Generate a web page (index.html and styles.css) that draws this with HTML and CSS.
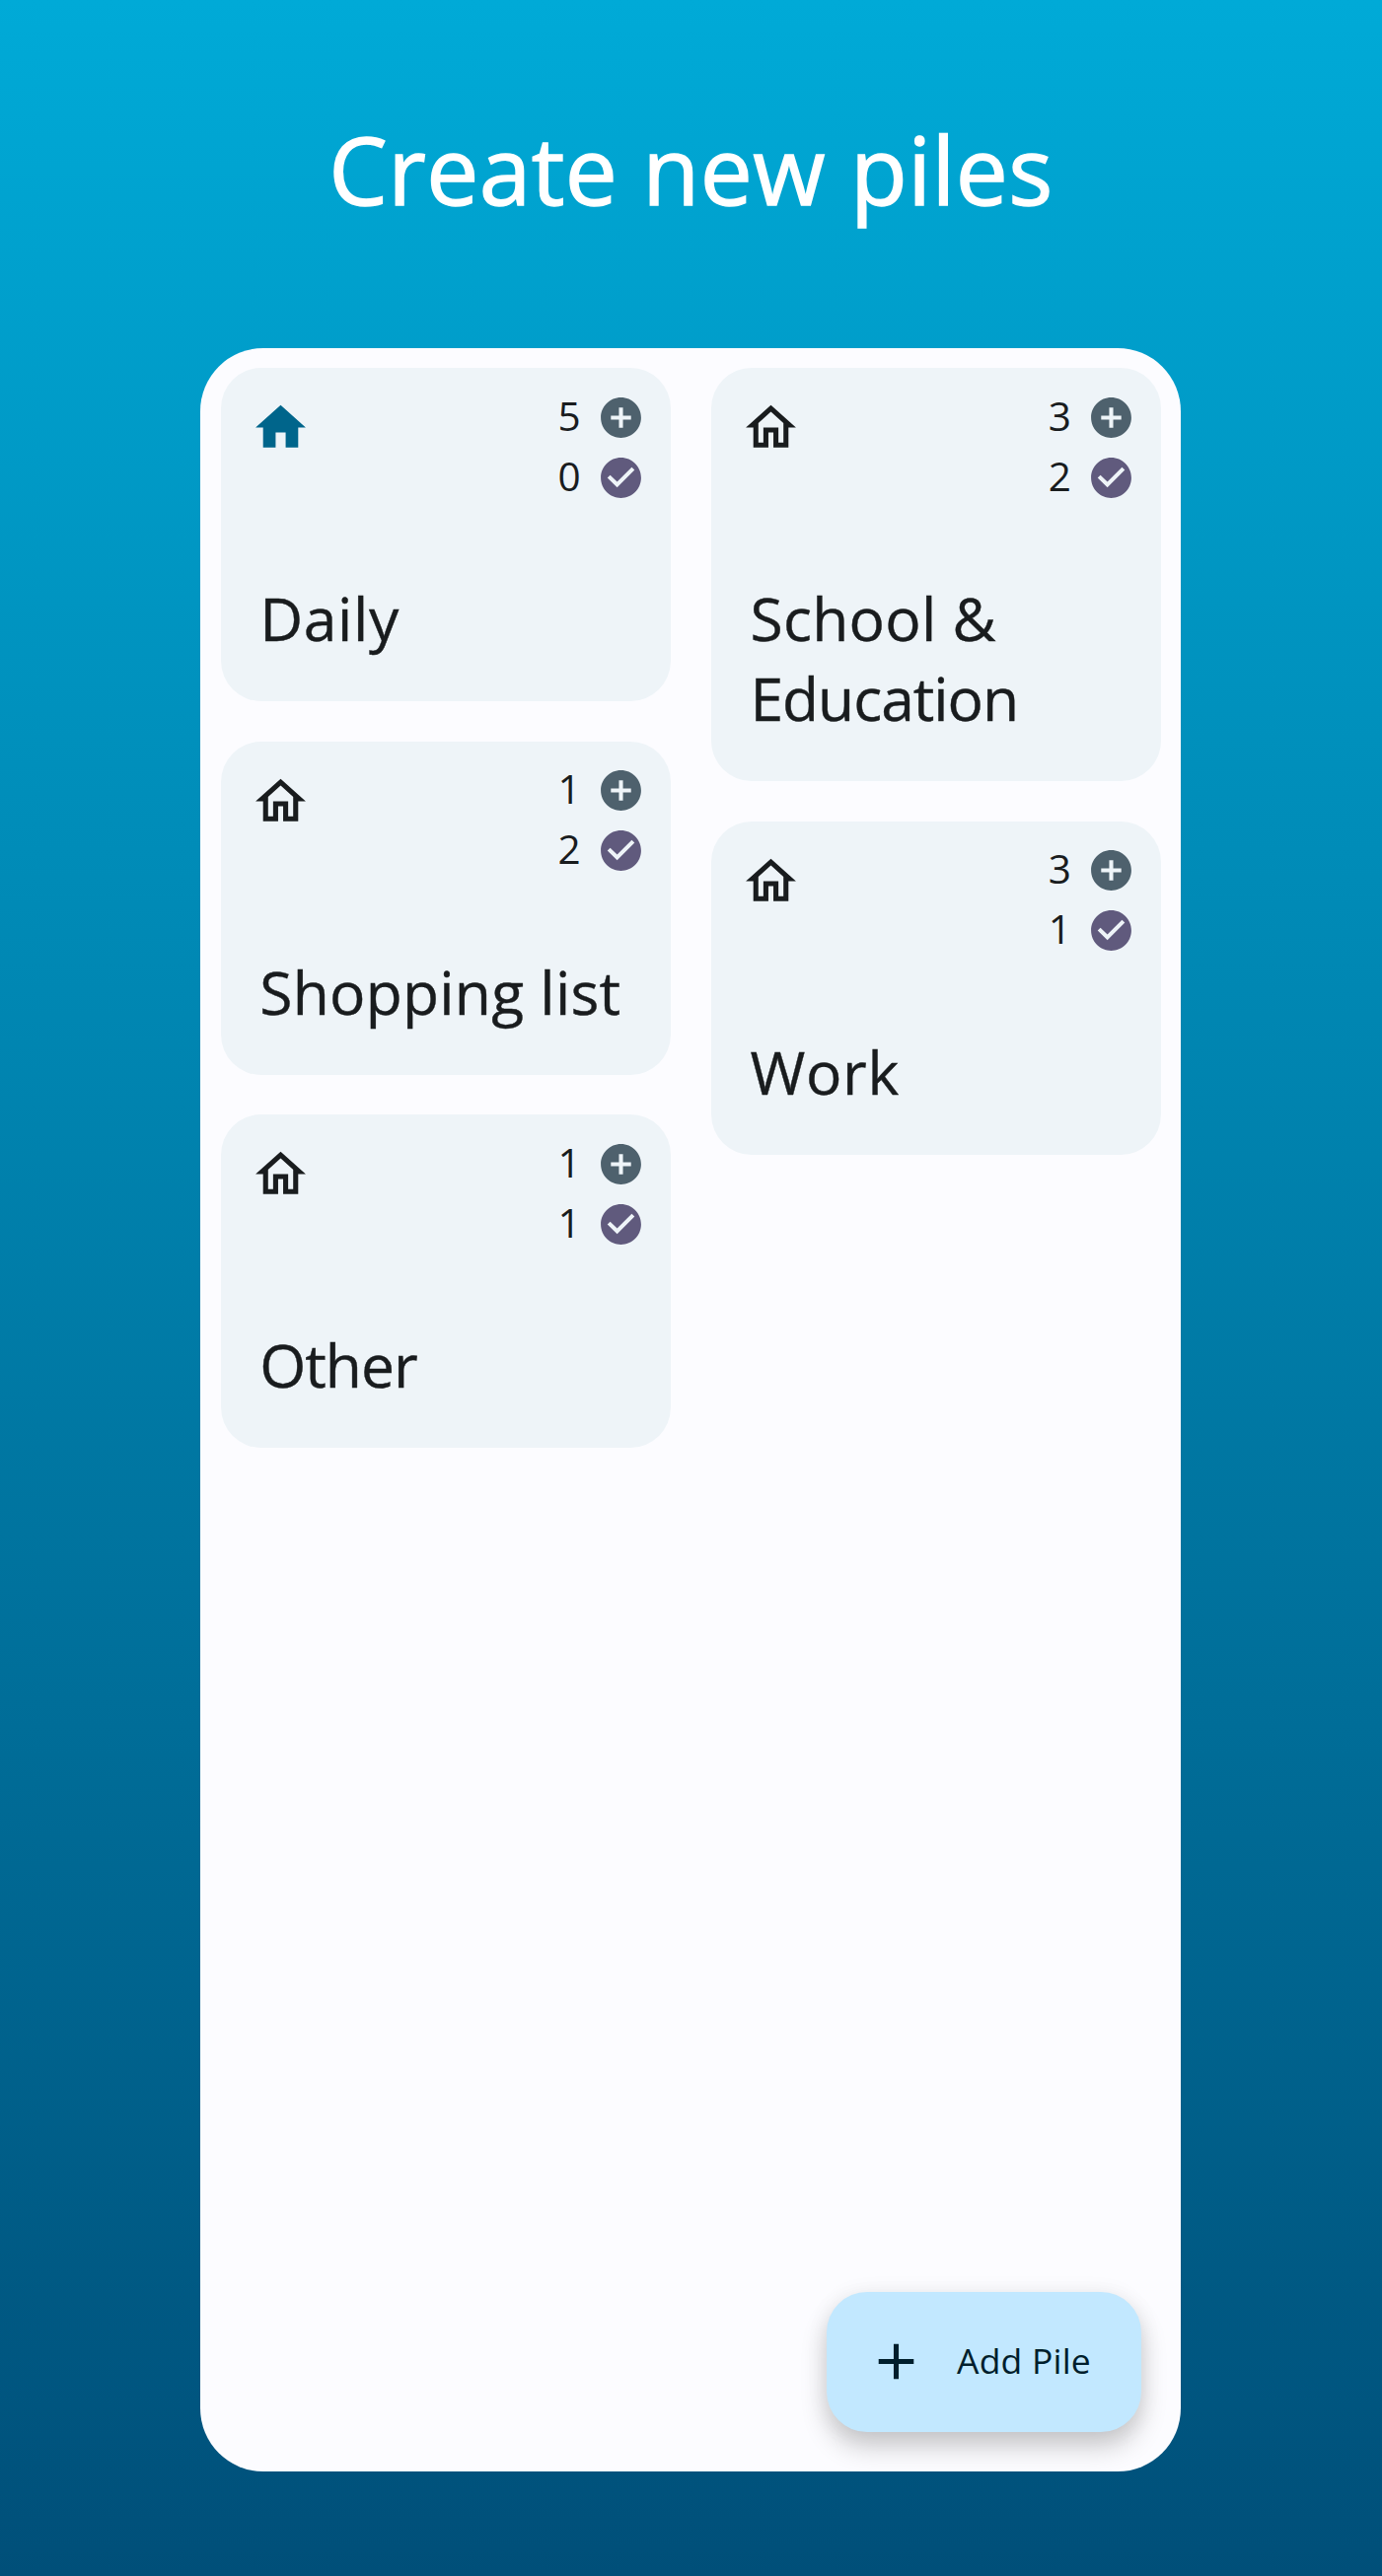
FILE: index.html
```
<!DOCTYPE html>
<html lang="en">
<head>
<meta charset="utf-8">
<title>Create new piles</title>
<link rel="stylesheet" href="styles.css">
</head>
<body>
<svg class="sprite" aria-hidden="true">
  <symbol id="home" viewBox="0 0 24 24"><path d="M10 20v-6h4v6h5v-8h3L12 3 2 12h3v8z"/></symbol>
  <symbol id="home-outline" viewBox="0 0 24 24"><path d="M12 5.69l5 4.5V18h-2v-6H9v6H7v-7.81l5-4.5M12 3L2 12h3v8h6v-6h2v6h6v-8h3L12 3z"/></symbol>
  <symbol id="add-circle" viewBox="0 0 24 24"><path d="M12 2C6.48 2 2 6.48 2 12s4.48 10 10 10 10-4.48 10-10S17.52 2 12 2zm5 11h-4v4h-2v-4H7v-2h4V7h2v4h4v2z"/></symbol>
  <symbol id="check-circle" viewBox="0 0 24 24"><path fill-rule="evenodd" d="M12 2C6.48 2 2 6.48 2 12s4.48 10 10 10 10-4.48 10-10S17.52 2 12 2zM10.1 16.8l-4.85-4.8 1.4-1.4 3.45 3.4 7.25-7.3 1.4 1.4z"/></symbol>
  <symbol id="add" viewBox="0 0 24 24"><path d="M19 13h-6v6h-2v-6H5v-2h6V5h2v6h6v2z"/></symbol>
</svg>

<h1 class="headline">Create new piles</h1>

<main class="screen">
  <div class="columns">
    <div class="column">
      <article class="pile">
        <div class="pile-top">
          <svg class="home home-active"><use href="#home"/></svg>
          <div class="counts">
            <div class="count"><span>5</span><svg class="icon open"><use href="#add-circle"/></svg></div>
            <div class="count"><span>0</span><svg class="icon done"><use href="#check-circle"/></svg></div>
          </div>
        </div>
        <h2 class="pile-title loose">Daily</h2>
      </article>
      <article class="pile">
        <div class="pile-top">
          <svg class="home"><use href="#home-outline"/></svg>
          <div class="counts">
            <div class="count"><span>1</span><svg class="icon open"><use href="#add-circle"/></svg></div>
            <div class="count"><span>2</span><svg class="icon done"><use href="#check-circle"/></svg></div>
          </div>
        </div>
        <h2 class="pile-title">Shopping list</h2>
      </article>
      <article class="pile">
        <div class="pile-top">
          <svg class="home"><use href="#home-outline"/></svg>
          <div class="counts">
            <div class="count"><span>1</span><svg class="icon open"><use href="#add-circle"/></svg></div>
            <div class="count"><span>1</span><svg class="icon done"><use href="#check-circle"/></svg></div>
          </div>
        </div>
        <h2 class="pile-title tighter">Other</h2>
      </article>
    </div>
    <div class="column">
      <article class="pile">
        <div class="pile-top">
          <svg class="home"><use href="#home-outline"/></svg>
          <div class="counts">
            <div class="count"><span>3</span><svg class="icon open"><use href="#add-circle"/></svg></div>
            <div class="count"><span>2</span><svg class="icon done"><use href="#check-circle"/></svg></div>
          </div>
        </div>
        <h2 class="pile-title">School &amp;<br><span class="tighter">Education</span></h2>
      </article>
      <article class="pile">
        <div class="pile-top">
          <svg class="home"><use href="#home-outline"/></svg>
          <div class="counts">
            <div class="count"><span>3</span><svg class="icon open"><use href="#add-circle"/></svg></div>
            <div class="count"><span>1</span><svg class="icon done"><use href="#check-circle"/></svg></div>
          </div>
        </div>
        <h2 class="pile-title loose">Work</h2>
      </article>
    </div>
  </div>
  <button class="fab"><svg class="fab-icon"><use href="#add"/></svg><span class="fab-label">Add Pile</span></button>
</main>
</body>
</html>
```
FILE: styles.css
```
* { box-sizing: border-box; }

body {
  margin: 0;
  height: 2612px;
  display: flex;
  flex-direction: column;
  align-items: center;
  background: linear-gradient(180deg, #00aad7 0%, #004f79 100%);
  font-family: "Open Sans", Lato, sans-serif;
  color: #191c1e;
}

.sprite { display: none; }
svg { flex: none; fill: currentColor; }

.headline {
  margin: 0;
  height: 353px;
  line-height: 343px;
  font-size: 94.5px;
  font-weight: 400;
  letter-spacing: 0.45px;
  -webkit-text-stroke: 1.4px #fff;
  color: #fff;
}

.screen {
  width: 994px;
  height: 2153px;
  margin-right: 1px;
  padding: 20px 20px 20.5px 20.5px;
  display: flex;
  flex-direction: column;
  border-radius: 64px;
  background: #fcfcff;
}

.columns {
  display: grid;
  grid-template-columns: 1fr 1fr;
  gap: 41px;
  align-items: start;
}

.column {
  display: flex;
  flex-direction: column;
  gap: 40.5px;
}

.pile {
  padding-bottom: 44px;
  border-radius: 41px;
  background: #eef4f8;
}

.pile-top {
  height: 213px;
  padding: 25.5px 26px 0 30px;
  display: flex;
  justify-content: space-between;
  align-items: flex-start;
}

.home {
  width: 61px;
  height: 61px;
  margin-top: 4.5px;
}

.home-active { color: #00658b; }

.counts {
  display: flex;
  flex-direction: column;
  gap: 12px;
}

.count {
  display: flex;
  gap: 16px;
  font-size: 40.5px;
  line-height: 46px;
}

.icon {
  width: 49px;
  height: 49px;
}

.open { color: #4e616d; }
.done { color: #605a7d; }

.pile-title {
  margin: 0;
  padding-left: 39.7px;
  font-size: 60.5px;
  font-weight: 400;
  line-height: 81px;
  letter-spacing: 0.28px;
  -webkit-text-stroke: 0.4px currentColor;
  white-space: nowrap;
}

.loose { letter-spacing: 0.7px; }
.tighter { letter-spacing: -1px; }

.fab {
  width: 319px;
  height: 142px;
  margin: auto 20.5px 20px 0;
  padding: 0 0 0 40px;
  align-self: flex-end;
  display: flex;
  align-items: center;
  gap: 31.5px;
  border: 0;
  border-radius: 41px;
  background: #c2e8ff;
  box-shadow: 0 15px 27px rgba(0, 0, 0, 0.2), 0 2px 24px rgba(0, 0, 0, 0.06);
  color: #001e2c;
  font-family: inherit;
}

.fab-icon {
  width: 61px;
  height: 61px;
}

.fab-label {
  padding-bottom: 3px;
  font-size: 35.5px;
  letter-spacing: 0.2px;
}
```
